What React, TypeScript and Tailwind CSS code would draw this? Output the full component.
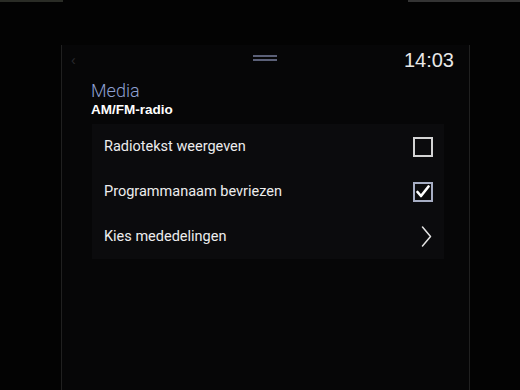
import { useState } from "react";

type Row = {
  label: string;
  kind: "checkbox" | "link";
  checked?: boolean;
};

const rows: Row[] = [
  { label: "Radiotekst weergeven", kind: "checkbox", checked: false },
  { label: "Programmanaam bevriezen", kind: "checkbox", checked: true },
  { label: "Kies mededelingen", kind: "link" },
];

function Checkbox({ checked }: { checked: boolean }) {
  if (!checked) {
    return <div className="w-[20px] h-[20px] border-2 border-[#d4d4d4]" />;
  }
  return (
    <div className="w-[20px] h-[20px] border-2 border-[#a7aec4] flex items-center justify-center">
      <svg width="14" height="13" viewBox="0 0 14 13" fill="none">
        <path d="M1.5 7 L5 11 L12.5 1.5" stroke="#ffffff" strokeWidth="2.6" strokeLinecap="round" strokeLinejoin="round" />
      </svg>
    </div>
  );
}

function Chevron() {
  return (
    <svg width="11" height="21" viewBox="0 0 11 21" fill="none" className="mr-[1px]">
      <path d="M1.5 1 L9.5 10.5 L1.5 20" stroke="#e4e4e4" strokeWidth="1.5" strokeLinecap="round" strokeLinejoin="round" />
    </svg>
  );
}

export default function App() {
  const [items] = useState(rows);

  return (
    <div className="w-[520px] h-[390px] bg-[#030303] flex flex-col overflow-hidden font-['Roboto',sans-serif]">
      {/* bezel edge */}
      <div className="h-[2px] flex justify-between">
        <div className="w-[63px] bg-[#2a2c26]" />
        <div className="w-[112px] bg-[#343434]" />
      </div>

      <div className="flex-1 flex pl-[61px]">
        <div className="w-[409px] mt-[43px] border-x border-[#202020] bg-[#060607] flex flex-col">
          {/* Header */}
          <div className="h-[30px] grid grid-cols-3 items-center">
            <div className="pl-[9px] text-[#2a2a2e] text-[14px] font-['Liberation_Sans',sans-serif]">‹</div>
            <div className="flex justify-center">
              <div className="w-[24px] flex flex-col gap-[2px] mb-[5px]">
                <div className="h-[2px] bg-[#5b6078]" />
                <div className="h-[2px] bg-[#5b6078]" />
              </div>
            </div>
            <div className="flex justify-end pr-[15px] text-[#e8e8e8] text-[20px] leading-none font-['Liberation_Sans',sans-serif]">
              14:03
            </div>
          </div>

          {/* Title */}
          <div className="pl-[29px] mt-[5px]">
            <div className="text-[18px] leading-[22px] font-light text-[#8ea0d2]">Media</div>
            <div className="text-[13.5px] leading-[16px] font-bold text-white font-['Liberation_Sans',sans-serif]">AM/FM-radio</div>
          </div>

          {/* Settings list */}
          <div className="ml-[30px] mr-[25px] mt-[6px] bg-[#0b0b0d] flex flex-col">
            {items.map((row) => (
              <div key={row.label} className="h-[45px] flex items-center justify-between pl-[12px] pr-[11px]">
                <span className="text-[14.5px] text-[#ededed]">{row.label}</span>
                {row.kind === "checkbox" ? <Checkbox checked={!!row.checked} /> : <Chevron />}
              </div>
            ))}
          </div>
        </div>
      </div>
    </div>
  );
}
